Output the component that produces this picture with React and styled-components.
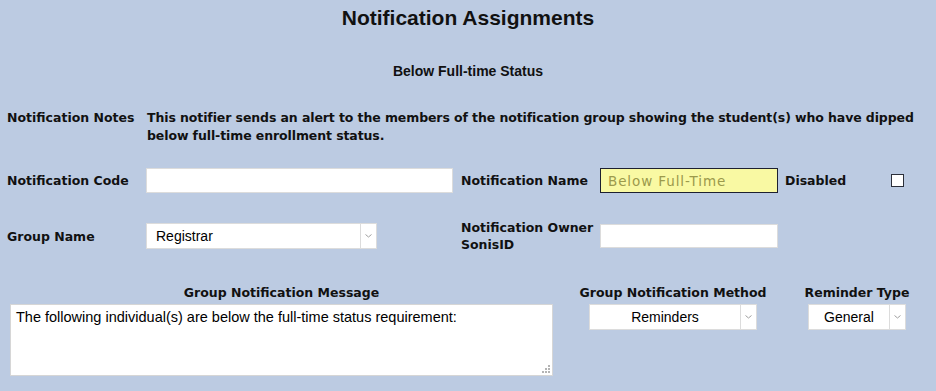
import React from "react";
import styled, { createGlobalStyle } from "styled-components";

const GlobalStyle = createGlobalStyle`
  html, body {
    margin: 0;
    padding: 0;
    background: #bccbe2;
  }
  body {
    font-family: "Liberation Sans", Arial, sans-serif;
    color: #111;
  }
`;

// PAGE

const Page = styled.div`
  width: 936px;
  height: 391px;
  overflow: hidden;
  background: #bccbe2;
`;

const Title = styled.h1`
  margin: 0;
  padding-top: 6px;
  height: 30px;
  text-align: center;
  font-family: "Liberation Sans", Arial, sans-serif;
  font-size: 21px;
  line-height: 24px;
  font-weight: bold;
`;

const SubTitle = styled.h2`
  margin: 0;
  padding-top: 27px;
  text-align: center;
  font-family: "Liberation Sans", Arial, sans-serif;
  font-size: 14px;
  line-height: 16px;
  font-weight: bold;
`;

const Form = styled.div`
  padding-left: 7px;
  padding-right: 14px;
`;

const Row = styled.div`
  display: flex;
  align-items: ${p => p.$align || "center"};
  margin-top: ${p => p.$top}px;
`;

const Label = styled.div`
  flex: none;
  width: ${p => p.$width}px;
  font-family: "DejaVu Sans", Verdana, sans-serif;
  font-size: 12.5px;
  line-height: 17px;
  font-weight: bold;
`;

const Notes = styled.div`
  flex: 1;
  font-family: "DejaVu Sans", Verdana, sans-serif;
  font-size: 12.5px;
  line-height: 18px;
  font-weight: bold;
  letter-spacing: -0.1px;
`;

const TextInput = styled.input`
  flex: none;
  box-sizing: border-box;
  width: ${p => p.$width}px;
  height: ${p => p.$height || 25}px;
  margin: 0 ${p => p.$right || 0}px 0 0;
  padding: 0 7px;
  border: 1px solid ${p => (p.$highlight ? "#1d2030" : "#dcdcdc")};
  background: ${p => (p.$highlight ? "#f9f9a3" : "#fff")};
  color: ${p => (p.$highlight ? "#9c9a4c" : "#111")};
  font-family: "DejaVu Sans", Verdana, sans-serif;
  font-size: 13.5px;
  letter-spacing: 0.9px;
  outline: none;
`;

const Check = styled.span`
  flex: none;
  box-sizing: border-box;
  width: 13px;
  height: 13px;
  border: 1px solid #2b2f3a;
  background: #fff;
  margin-left: ${p => p.$left}px;
`;

// SELECT

const SelectBox = styled.div`
  flex: none;
  box-sizing: border-box;
  display: flex;
  width: ${p => p.$width}px;
  height: 26px;
  margin-right: ${p => p.$right || 0}px;
  border: 1px solid #dcdcdc;
  background: #fff;
`;

const SelectValue = styled.div`
  flex: 1;
  display: flex;
  align-items: center;
  justify-content: ${p => (p.$center ? "center" : "flex-start")};
  padding-left: ${p => (p.$center ? 0 : 9)}px;
  font-family: "Liberation Sans", Arial, sans-serif;
  font-size: 14px;
  color: #000;
`;

const SelectArrow = styled.div`
  flex: none;
  width: 15px;
  border-left: 1px solid #dcdcdc;
  display: flex;
  align-items: center;
  justify-content: center;
`;

const Select = ({ value, width, center, right }) => (
  <SelectBox $width={width} $right={right}>
    <SelectValue $center={center}>{value}</SelectValue>
    <SelectArrow>
      <svg width="7" height="4" viewBox="0 0 7 4">
        <path d="M0.5 0.5 L3.5 3 L6.5 0.5" fill="none" stroke="#a0a0a0" strokeWidth="1" />
      </svg>
    </SelectArrow>
  </SelectBox>
);

// BOTTOM

const Bottom = styled.div`
  display: flex;
  margin-top: 32px;
`;

const Column = styled.div`
  flex: none;
  display: flex;
  flex-direction: column;
  align-items: center;
  width: ${p => p.$width}px;
  margin-left: ${p => p.$left}px;
`;

const ColumnHead = styled.div`
  font-family: "DejaVu Sans", Verdana, sans-serif;
  font-size: 12.5px;
  font-weight: bold;
  line-height: 15px;
  margin-bottom: 4px;
  white-space: nowrap;
`;

const MessageWrap = styled.div`
  position: relative;
  width: 543px;
  height: 72px;
`;

const Message = styled.textarea`
  box-sizing: border-box;
  width: 100%;
  height: 100%;
  margin: 0;
  padding: 4px 5px;
  border: 1px solid #d6d6d6;
  background: #fff;
  color: #000;
  font-family: "Liberation Sans", Arial, sans-serif;
  font-size: 14.5px;
  line-height: 17px;
  resize: none;
  outline: none;
  display: block;
`;

const Grip = styled.svg`
  position: absolute;
  right: 3px;
  bottom: 3px;
  pointer-events: none;
`;

export default function App() {
  return (
    <Page>
      <GlobalStyle />
      <Title>Notification Assignments</Title>
      <SubTitle>Below Full-time Status</SubTitle>

      <Form>
        <Row $align="flex-start" $top={30}>
          <Label $width={140}>Notification Notes</Label>
          <Notes>
            This notifier sends an alert to the members of the notification group showing the student(s) who have dipped
            below full-time enrollment status.
          </Notes>
        </Row>

        <Row $top={23}>
          <Label $width={139}>Notification Code</Label>
          <TextInput $width={307} $right={8} />
          <Label $width={139}>Notification Name</Label>
          <TextInput $width={178} $right={7} $highlight defaultValue="Below Full-Time" />
          <Label $width={99}>Disabled</Label>
          <Check $left={7} />
        </Row>

        <Row $top={26}>
          <Label $width={139}>Group Name</Label>
          <Select width={231} right={84} value="Registrar" />
          <Label $width={139}>
            Notification Owner
            <br />
            SonisID
          </Label>
          <TextInput $width={178} $height={24} />
        </Row>
      </Form>

      <Bottom>
        <Column $width={543} $left={10}>
          <ColumnHead>Group Notification Message</ColumnHead>
          <MessageWrap>
            <Message defaultValue="The following individual(s) are below the full-time status requirement:" />
            <Grip width="8" height="8" viewBox="0 0 8 8">
              <g fill="#b4b4b4">
                <rect x="6" y="0" width="2" height="2" />
                <rect x="3" y="3" width="2" height="2" />
                <rect x="6" y="3" width="2" height="2" />
                <rect x="0" y="6" width="2" height="2" />
                <rect x="3" y="6" width="2" height="2" />
                <rect x="6" y="6" width="2" height="2" />
              </g>
            </Grip>
          </MessageWrap>
        </Column>
        <Column $width={186} $left={27}>
          <ColumnHead>Group Notification Method</ColumnHead>
          <Select width={168} center value="Reminders" />
        </Column>
        <Column $width={114} $left={34}>
          <ColumnHead>Reminder Type</ColumnHead>
          <Select width={98} center value="General" />
        </Column>
      </Bottom>
    </Page>
  );
}
